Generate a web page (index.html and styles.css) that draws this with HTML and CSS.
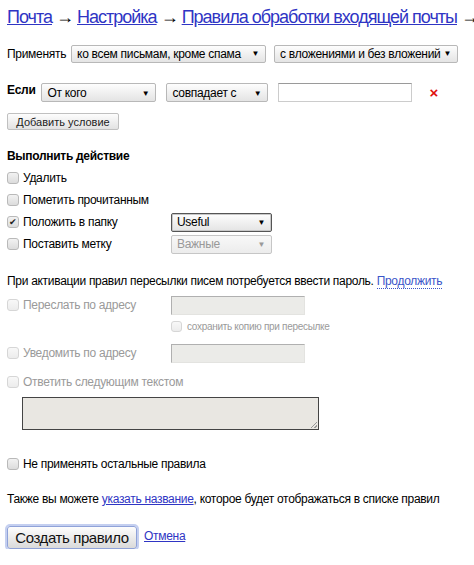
FILE: index.html
```html
<!DOCTYPE html>
<html lang="ru">
<head>
    <meta charset="UTF-8">
    <title>Правила обработки входящей почты</title>
    <link rel="stylesheet" href="styles.css">
</head>
<body>
    <div class="crumbs">
        <a href="#">Почта</a> → <a href="#">Настройка</a> → <a href="#">Правила обработки входящей почты</a> → <span class="current">Новое правило</span>
    </div>

    <div class="row row-apply">
        <span class="label">Применять</span>
        <div class="select sel-apply">ко всем письмам, кроме спама<span class="arrow">▼</span></div>
        <div class="select sel-attach">с вложениями и без вложений<span class="arrow">▼</span></div>
    </div>

    <div class="row row-if">
        <span class="label bold">Если</span>
        <div class="select sel-from">От кого<span class="arrow">▼</span></div>
        <div class="select sel-match">совпадает с<span class="arrow">▼</span></div>
        <div class="input input-cond"></div>
        <span class="remove">×</span>
    </div>

    <div class="row row-add">
        <button class="small-btn">Добавить условие</button>
    </div>

    <div class="section-title">Выполнить действие</div>

    <div class="row check-row">
        <span class="cb"></span><span class="col">Удалить</span>
    </div>
    <div class="row check-row">
        <span class="cb"></span><span class="col">Пометить прочитанным</span>
    </div>
    <div class="row check-row">
        <span class="cb checked">✔</span><span class="col">Положить в папку</span>
        <div class="select sel-folder focused">Useful<span class="arrow">▼</span></div>
    </div>
    <div class="row check-row">
        <span class="cb"></span><span class="col">Поставить метку</span>
        <div class="select sel-folder disabled">Важные<span class="arrow">▼</span></div>
    </div>

    <div class="notice">
        При активации правил пересылки писем потребуется ввести пароль. <a href="#" class="dotted">Продолжить</a>
    </div>

    <div class="row check-row off">
        <span class="cb"></span><span class="col">Переслать по адресу</span>
        <div class="input input-off"></div>
    </div>
    <div class="row sub-row off">
        <span class="cb small"></span><span>сохранить копию при пересылке</span>
    </div>
    <div class="row check-row off notify">
        <span class="cb"></span><span class="col">Уведомить по адресу</span>
        <div class="input input-off"></div>
    </div>
    <div class="row check-row off reply">
        <span class="cb"></span><span class="col">Ответить следующим текстом</span>
    </div>
    <div class="textarea"><span class="grip"></span></div>

    <div class="row check-row last-rule">
        <span class="cb"></span><span>Не применять остальные правила</span>
    </div>

    <div class="hint">
        Также вы можете <a href="#">указать название</a>, которое будет отображаться в списке правил
    </div>

    <div class="row actions">
        <button class="main-btn">Создать правило</button>
        <a href="#" class="cancel">Отмена</a>
    </div>
</body>
</html>
```

FILE: styles.css
```css
body {
    font-family: "Liberation Sans", Arial, sans-serif;
    font-size: 12px;
    letter-spacing: -0.3px;
    color: #000;
    margin: 0;
    padding: 0 0 0 7px;
    background: #fff;
    overflow: hidden;
}
a {
    color: #2f35c4;
}
.crumbs {
    font-size: 18px;
    letter-spacing: -1px;
    line-height: 22px;
    padding-top: 6px;
    white-space: nowrap;
    overflow: hidden;
    width: 467px;
}
.crumbs .current {
    color: #8a4a10;
}
.row {
    display: flex;
    align-items: center;
    white-space: nowrap;
}
.label {
    margin-right: 5px;
}
.bold {
    font-weight: bold;
}
.row-apply {
    margin-top: 17px;
    height: 18px;
}
.row-if {
    margin-top: 20px;
    height: 19px;
}
.row-if .label {
    margin-right: 6px;
    margin-top: -6px;
}
.select {
    position: relative;
    box-sizing: border-box;
    height: 18px;
    line-height: 16px;
    padding-left: 5px;
    border: 1px solid #b8b8b8;
    border-radius: 2px;
    background: linear-gradient(#fdfdfd, #e4e4e4);
    white-space: nowrap;
    overflow: hidden;
}
.arrow {
    position: absolute;
    right: 6px;
    top: 0;
    font-size: 8px;
}
.sel-apply {
    width: 195px;
}
.sel-attach {
    width: 184px;
    margin-left: 8px;
}
.sel-from {
    width: 115px;
    height: 19px;
    line-height: 19px;
}
.sel-match {
    width: 102px;
    height: 19px;
    line-height: 19px;
    margin-left: 10px;
}
.input {
    box-sizing: border-box;
    height: 19px;
    border: 1px solid #ccc;
    border-top-color: #9a9a9a;
    background: #fff;
}
.input-cond {
    width: 134px;
    margin-left: 10px;
}
.remove {
    color: #e01010;
    font-weight: bold;
    font-size: 15px;
    margin-left: 17px;
}
.row-add {
    margin-top: 11px;
}
.small-btn {
    font-family: inherit;
    font-size: 11px;
    letter-spacing: 0;
    height: 17px;
    width: 112px;
    padding: 0;
    border: 1px solid #c0c0c0;
    border-radius: 2px;
    background: linear-gradient(#fdfdfd, #e2e2e2);
    color: #222;
}
.section-title {
    font-weight: bold;
    margin-top: 18px;
    line-height: 16px;
}
.check-row {
    height: 22px;
}
.section-title + .check-row {
    margin-top: 3px;
}
.cb {
    box-sizing: border-box;
    width: 12px;
    height: 12px;
    border: 1px solid #b9b9b9;
    border-radius: 3px;
    background: linear-gradient(#f2f2f2, #dcdcdc);
    margin-right: 4px;
    flex-shrink: 0;
    font-size: 9px;
    line-height: 10px;
    text-align: center;
    color: #222;
}
.col {
    width: 148px;
}
.sel-folder {
    width: 101px;
    height: 19px;
    line-height: 17px;
}
.focused {
    border: 1px solid #555;
    box-shadow: inset 0 0 0 1px #c8c8c8;
}
.disabled {
    color: #999;
    background: linear-gradient(#f8f8f8, #ececec);
    border-color: #c6c6c6;
}
.notice {
    margin-top: 18px;
    line-height: 16px;
    white-space: nowrap;
}
.dotted {
    color: #3b55c9;
    text-decoration: none;
    border-bottom: 1px dotted #3b55c9;
}
.off {
    color: #9a9a9a;
}
.off .cb {
    border-color: #d6d6d6;
    background: linear-gradient(#f8f8f8, #ececec);
}
.notice + .off {
    margin-top: 5px;
}
.input-off {
    width: 134px;
    background: #ebebe8;
    border-color: #e3e3e0;
    border-top-color: #b0b0b0;
    border-left-color: #b0b0b0;
}
.sub-row {
    height: 20px;
    font-size: 10px;
    padding-left: 164px;
}
.cb.small {
    width: 11px;
    height: 11px;
    margin-right: 5px;
}
.notify {
    margin-top: 6px;
}
.reply {
    margin-top: 7px;
}
.textarea {
    position: relative;
    box-sizing: border-box;
    width: 297px;
    height: 33px;
    margin: 4px 0 0 15px;
    border: 1px solid #444;
    background: #e9e7e2;
}
.grip {
    position: absolute;
    right: 1px;
    bottom: 1px;
    width: 6px;
    height: 6px;
    background: linear-gradient(135deg, transparent 45%, #999 45%, #999 55%, transparent 55%, transparent 75%, #999 75%, #999 85%, transparent 85%);
}
.last-rule {
    margin-top: 23px;
}
.hint {
    margin-top: 16px;
    line-height: 16px;
    white-space: nowrap;
}
.actions {
    margin-top: 19px;
}
.main-btn {
    font-family: inherit;
    font-size: 15px;
    letter-spacing: -0.4px;
    height: 23px;
    width: 130px;
    padding: 0;
    color: #111;
    border: 1px solid #8fa2d8;
    border-radius: 3px;
    box-shadow: 0 0 0 2px #c4cff0;
    background: linear-gradient(#fdfdfd, #dadada);
}
.cancel {
    font-size: 12px;
    margin-left: 7px;
    margin-top: -4px;
}
```
